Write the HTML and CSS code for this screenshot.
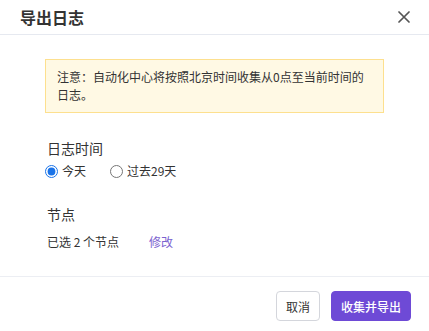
FILE: index.html
```html
<!DOCTYPE html>
<html lang="zh">
<head>
<meta charset="utf-8">
<link rel="stylesheet" href="styles.css">
</head>
<body>
<div class="dialog">
  <div class="header">
    <div class="title">导出日志</div>
    <button class="close" aria-label="关闭">
      <svg width="12" height="12" viewBox="0 0 12 12"><path d="M1 1L11 11M11 1L1 11" stroke="#555" stroke-width="1.7" stroke-linecap="round"/></svg>
    </button>
  </div>
  <div class="body">
    <div class="alert">注意：自动化中心将按照北京时间收集从0点至当前时间的日志。</div>
    <div class="field field-time">
      <div class="label">日志时间</div>
      <div class="radios">
        <label class="radio"><input type="radio" name="t" checked><span>今天</span></label>
        <label class="radio"><input type="radio" name="t"><span>过去29天</span></label>
      </div>
    </div>
    <div class="field field-node">
      <div class="label">节点</div>
      <div class="nodes"><span>已选 2 个节点</span><a class="link">修改</a></div>
    </div>
  </div>
  <div class="footer">
    <button class="btn btn-default">取消</button>
    <button class="btn btn-primary">收集并导出</button>
  </div>
</div>
</body>
</html>
```

FILE: styles.css
```css
* { box-sizing: border-box; }
body {
  margin: 0;
  background: #fff;
  font-family: "Noto Sans CJK SC", "Noto Sans", sans-serif;
  color: #333;
}
.dialog { width: 429px; height: 331px; display: flex; flex-direction: column; }
.header {
  height: 35px;
  border-bottom: 1px solid #e6e9f0;
  display: flex;
  align-items: center;
  justify-content: space-between;
  padding: 0 19px 1px 20px;
}
.title { font-size: 16px; font-weight: 700; color: #333; line-height: 20px; }
.close {
  border: 0; background: none; padding: 0; width: 12px; height: 12px;
  display: flex; cursor: pointer;
}
.body { flex: 1; padding: 24px 45px 0 45px; }
.alert {
  width: 339px;
  background: #fff9e4;
  border: 1px solid #fde08f;
  padding: 8px 11px;
  font-size: 12px;
  line-height: 18px;
  color: #333;
}
.field-time { margin-top: 25px; padding-left: 2px; }
.label { font-size: 14px; line-height: 20px; color: #333; }
.radios { display: flex; margin-top: 6px; margin-left: -2px; }
.radio { display: flex; align-items: center; font-size: 12px; line-height: 14px; margin-right: 24px; }
.radio input { width: 13px; height: 13px; margin: 0 4px 0 0; accent-color: #1a73e8; }
.field-node { margin-top: 26px; padding-left: 2px; }
.nodes { display: flex; font-size: 12px; line-height: 16px; margin-top: 10px; }
.link { color: #7b62cf; margin-left: 30px; }
.footer {
  border-top: 1px solid #eceef3;
  height: 55px;
  display: flex;
  justify-content: flex-end;
  align-items: flex-start;
  padding: 14px 18px 0 0;
  gap: 11px;
}
.btn {
  height: 30px;
  font-family: inherit;
  font-size: 12px;
  border-radius: 4px;
  padding: 0 9px;
  cursor: pointer;
}
.btn-default { background: #fff; border: 1px solid #d4d6dc; color: #333; }
.btn-primary { background: #6e4ad6; border: 1px solid #6e4ad6; color: #fff; font-weight: 500; }
```
